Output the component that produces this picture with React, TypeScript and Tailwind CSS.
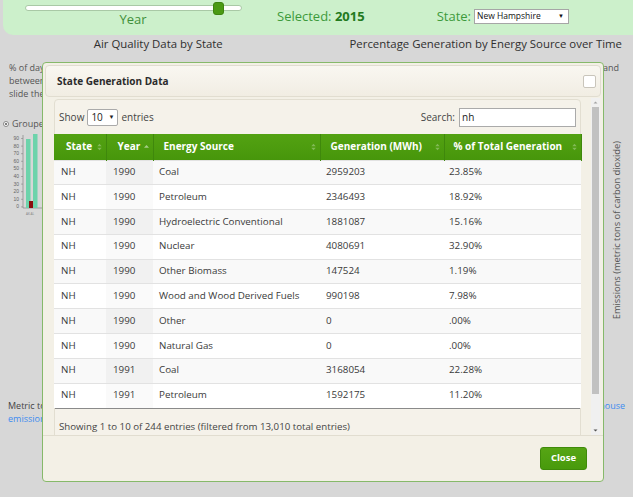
import React from 'react';

type Row = [string, string, string, string, string];

const rows: Row[] = [
  ['NH', '1990', 'Coal', '2959203', '23.85%'],
  ['NH', '1990', 'Petroleum', '2346493', '18.92%'],
  ['NH', '1990', 'Hydroelectric Conventional', '1881087', '15.16%'],
  ['NH', '1990', 'Nuclear', '4080691', '32.90%'],
  ['NH', '1990', 'Other Biomass', '147524', '1.19%'],
  ['NH', '1990', 'Wood and Wood Derived Fuels', '990198', '7.98%'],
  ['NH', '1990', 'Other', '0', '.00%'],
  ['NH', '1990', 'Natural Gas', '0', '.00%'],
  ['NH', '1991', 'Coal', '3168054', '22.28%'],
  ['NH', '1991', 'Petroleum', '1592175', '11.20%'],
];

const columns = [
  { label: 'State', w: 'w-[52px]', pad: 'pl-[12px]', cell: 'pl-[7px]' },
  { label: 'Year', w: 'w-[47px]', pad: 'pl-[11px]', cell: 'pl-[7px]', sorted: true },
  { label: 'Energy Source', w: 'w-[167px]', pad: 'pl-[10px]', cell: 'pl-[6px]' },
  { label: 'Generation (MWh)', w: 'w-[124px]', pad: 'pl-[10px]', cell: 'pl-[6px]' },
  { label: '% of Total Generation', w: 'w-[137px]', pad: 'pl-[9px]', cell: 'pl-[5px]' },
];

const SortIcon = ({ asc }: { asc?: boolean }) => (
  <svg width="5" height="8" viewBox="0 0 5 8" className="shrink-0">
    {asc ? (
      <path d="M0 4.8 L2.5 2 L5 4.8Z" fill="#fff" opacity="0.5" />
    ) : (
      <>
        <path d="M0.3 3.2 L2.5 0.8 L4.7 3.2Z" fill="#fff" opacity="0.3" />
        <path d="M0.3 4.8 L2.5 7.2 L4.7 4.8Z" fill="#fff" opacity="0.3" />
      </>
    )}
  </svg>
);

const MiniChart = () => (
  <svg width="40" height="88" viewBox="0 0 40 88">
    {[90, 80, 70, 60, 50, 40, 30, 20, 10, 0].map((v, i) => (
      <g key={v}>
        <text x="15" y={9 + i * 7.6} fontSize="5" fill="#666" textAnchor="end" fontFamily="Liberation Sans, sans-serif">
          {v}
        </text>
        <line x1="17" x2="19" y1={7.5 + i * 7.6} y2={7.5 + i * 7.6} stroke="#777" strokeWidth="0.5" />
      </g>
    ))}
    <line x1="19" x2="19" y1="4" y2="77" stroke="#777" strokeWidth="0.6" />
    <line x1="19" x2="40" y1="77" y2="77" stroke="#777" strokeWidth="0.6" />
    <rect x="22" y="8" width="4.5" height="69" fill="#6dd3ab" />
    <rect x="29" y="3" width="4.5" height="74" fill="#6dd3ab" />
    <rect x="25" y="70" width="4" height="7" fill="#8b0f0f" />
    <text x="22" y="84" fontSize="3" fill="#777">AK AL</text>
  </svg>
);

export default function App() {
  return (
    <div className="relative w-[633px] h-[497px] overflow-hidden bg-[#d7d7d7] font-['Open_Sans',sans-serif] text-[#333]">
      {/* top filter bar */}
      <div className="ml-[3px] h-[35px] rounded-bl-[10px] bg-[#ccf0cb] flex items-start">
        <div className="w-[240px] pl-[20px] pt-[5px] flex flex-col items-center">
          <div className="relative w-[217px] h-[6px] rounded-full bg-white border border-[#a9c9a6]">
            <div className="absolute left-[187px] -top-[4px] w-[11px] h-[13px] rounded-[3px] bg-[#4b9a14] border border-[#3d8510]" />
          </div>
          <span className="text-[13px] leading-[17px] text-[#3f8f3a]">Year</span>
        </div>
        <div className="ml-[34px] pt-[7px] text-[13px] leading-[18px] text-[#3d9a3b]">
          Selected: <b className="text-[#237a1e]">2015</b>
        </div>
        <div className="ml-[72px] pt-[7px] flex items-center gap-[3px] text-[13px] leading-[18px] text-[#3d9a3b]">
          State:
          <div className="w-[95px] h-[15px] bg-white border border-[#a6a6a6] flex items-center justify-between px-[2px] text-[8.5px] text-[#111]">
            New Hampshire
            <span className="text-[6px] pr-[2px]">▼</span>
          </div>
        </div>
      </div>

      {/* section headings */}
      <div className="grid grid-cols-2 mt-[1px] text-[11.4px] leading-[16px] text-[#2f2f2f]">
        <div className="text-center">Air Quality Data by State</div>
        <div className="text-center pl-[22px]">Percentage Generation by Energy Source over Time</div>
      </div>

      {/* intro paragraph */}
      <div className="mt-[9px] pl-[9px] pr-[14px] text-[9px] leading-[13px] text-[#555] whitespace-nowrap">
        <div className="flex justify-between">
          <span>% of days when air quality was good (green) and bad (red).</span>
          <span>1990 and</span>
        </div>
        <div>between</div>
        <div>slide the</div>
      </div>

      {/* chart area behind the dialog */}
      <div className="h-[282px] flex mt-[17px] pl-[3px]">
        <div className="flex flex-col">
          <div className="flex items-center gap-[3px] text-[9px] leading-[13px] text-[#555] whitespace-nowrap">
            <span className="w-[6px] h-[6px] rounded-full border border-[#888] bg-white flex items-center justify-center">
              <span className="w-[2px] h-[2px] rounded-full bg-[#555]" />
            </span>
            Grouped
          </div>
          <div className="mt-[1px] ml-[1px]">
            <MiniChart />
          </div>
        </div>
        <div className="flex-1" />
        <div className="flex flex-col mt-[24px] mr-[10px]">
          <span className="[writing-mode:vertical-rl] rotate-180 text-[9.3px] leading-[12px] text-[#555]">
            Emissions (metric tons of carbon dioxide)
          </span>
        </div>
      </div>

      {/* footnote */}
      <div className="px-[8px] text-[9px] leading-[13px] whitespace-nowrap">
        <div className="flex justify-between">
          <span className="text-[#444]">Metric to</span>
          <span className="text-[#3d8cf0]">house</span>
        </div>
        <div className="text-[#3d8cf0]">emission</div>
      </div>

      {/* dialog */}
      <div className="absolute left-[42px] top-[62px] w-[562px] h-[420px] rounded-[4px] border border-[#86b96a] bg-[#f3f0e6] flex flex-col">
        <div className="mx-[2px] mt-[2px] h-[32px] rounded-[4px] border border-[#e1ddd0] bg-gradient-to-b from-[#f9f7f1] to-[#f1ede3] flex items-center justify-between pl-[11px] pr-[4px]">
          <span className="text-[10px] font-bold text-[#2b2b2b]">State Generation Data</span>
          <span className="w-[13px] h-[13px] rounded-[2px] border border-[#c9c5bb] bg-white" />
        </div>

        <div className="mt-[1px] ml-[2px] mr-[3px] h-[337px] flex">
          <div className="flex-1 overflow-hidden pl-[9px] pr-[10px] pt-[1px]">
            <div className="rounded-t-[4px] border border-[#e2ded1] bg-[#f5f2ea]">
              <div className="h-[34px] flex items-center justify-between pl-[4px] pr-[4px] text-[10px] text-[#444]">
                <div className="flex items-center gap-[3px]">
                  Show
                  <div className="w-[31px] h-[17px] bg-white border border-[#aaa] rounded-[2px] flex items-center justify-between pl-[3px] pr-[3px] text-[10px] text-[#222]">
                    10<span className="text-[6px]">▼</span>
                  </div>
                  entries
                </div>
                <div className="flex items-center gap-[4px]">
                  Search:
                  <div className="w-[117px] h-[19px] bg-white border border-[#aaa] flex items-center pl-[2px] text-[10px] text-[#222]">
                    nh
                  </div>
                </div>
              </div>
              <table className="table-fixed border-collapse w-[527px] -ml-px -mr-px text-[9.8px] text-[#3a3a3a]">
                <thead>
                  <tr className="h-[26px] bg-gradient-to-b from-[#53a212] to-[#47960b]">
                    {columns.map((c) => (
                      <th
                        key={c.label}
                        className={`${c.w} ${c.pad} pr-[4px] text-left text-[10px] font-bold text-white border-x border-[#3f880c] first:border-l-0`}
                      >
                        <div className="flex items-center justify-between">
                          <span>{c.label}</span>
                          <SortIcon asc={c.sorted} />
                        </div>
                      </th>
                    ))}
                  </tr>
                </thead>
                <tbody>
                  {rows.map((r, i) => (
                    <tr
                      key={i}
                      className={`h-[24.8px] border-t border-[#e2e2e2] ${i % 2 === 0 ? 'bg-[#f9f9f9]' : 'bg-white'}`}
                    >
                      {r.map((v, j) => (
                        <td
                          key={j}
                          className={`${columns[j].cell} ${
                            j === 1 ? (i % 2 === 0 ? 'bg-[#f1f1f1]' : 'bg-[#fafafa]') : ''
                          }`}
                        >
                          {v}
                        </td>
                      ))}
                    </tr>
                  ))}
                </tbody>
              </table>
              <div className="border-t border-[#8a8a8a] pt-[11px] pl-[4px] h-[40px] text-[9.7px] text-[#444]">
                Showing 1 to 10 of 244 entries (filtered from 13,010 total entries)
              </div>
            </div>
          </div>
          <div className="w-[9px] bg-[#f0f0f0] flex flex-col items-center">
            <svg width="9" height="9" viewBox="0 0 9 9">
              <path d="M2.5 5.5 L4.5 3.5 L6.5 5.5Z" fill="#a3a3a3" />
            </svg>
            <div className="w-[7px] h-[287px] bg-[#c1c1c1]" />
            <div className="flex-1" />
            <svg width="9" height="9" viewBox="0 0 9 9">
              <path d="M2.5 3.5 L4.5 5.5 L6.5 3.5Z" fill="#505050" />
            </svg>
          </div>
        </div>

        <div className="flex-1 border-t border-[#e1ddd0] flex items-start justify-end pt-[11px] pr-[16px]">
          <button className="w-[47px] h-[23px] rounded-[3px] border border-[#3f8a0a] bg-gradient-to-b from-[#56a514] to-[#489a0c] text-white text-[9.5px] font-bold">
            Close
          </button>
        </div>
      </div>
    </div>
  );
}
